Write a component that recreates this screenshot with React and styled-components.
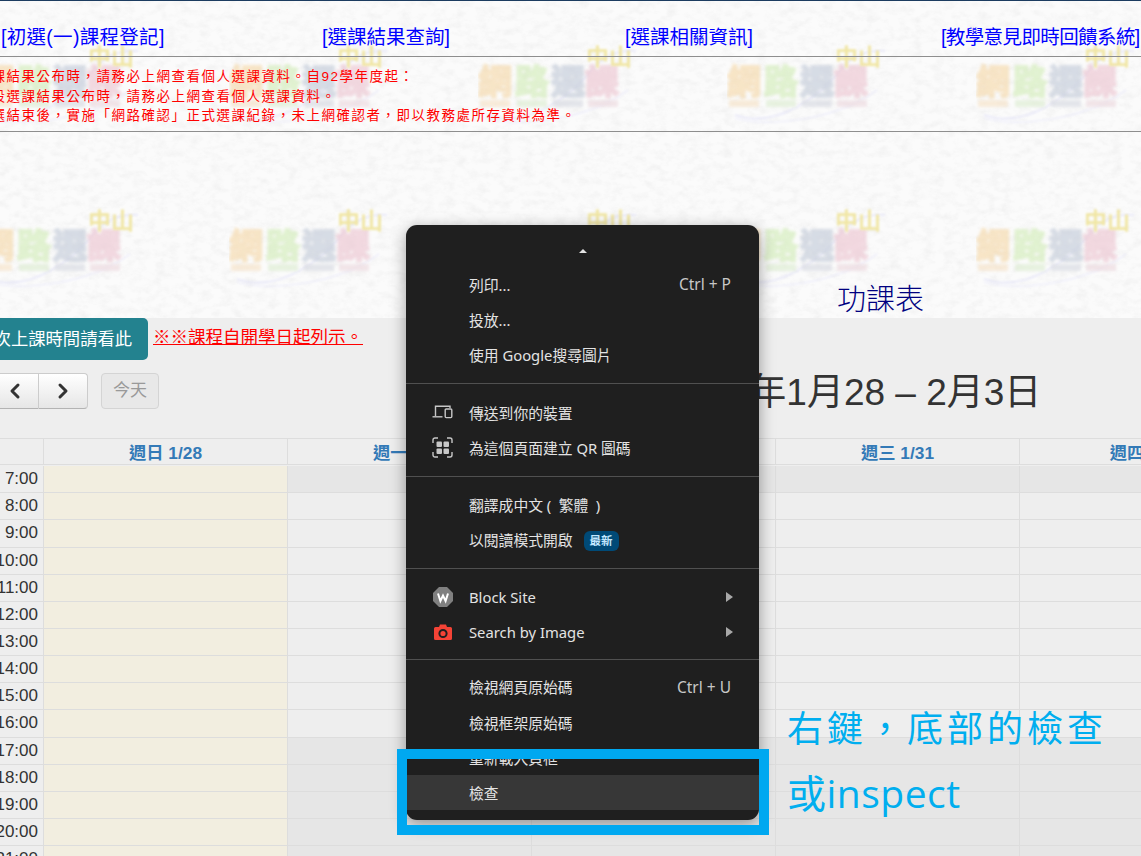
import React from 'react';
import styled, { createGlobalStyle } from 'styled-components';
import { ChevronLeft, ChevronRight } from 'lucide-react';

const GlobalStyle = createGlobalStyle`
    html, body {
        margin: 0;
        padding: 0;
        height: 100%;
        overflow: hidden;
    }
    body {
        font-family: "Liberation Sans", "Noto Sans CJK TC", sans-serif;
    }
    * {
        box-sizing: border-box;
    }
`;

const Screen = styled.div`
    position: relative;
    width: 1141px;
    height: 856px;
    overflow: hidden;
    background: #fafafa;
`;

const PaperLayer = styled.svg`
    position: absolute;
    top: 0;
    left: 0;
    width: 1141px;
    height: 856px;
`;

const Page = styled.div`
    position: relative;
    display: flex;
    flex-direction: column;
    height: 856px;
    border-top: 1px solid #1c3c60;
`;

const Nav = styled.nav`
    display: grid;
    grid-template-columns: 321px 303px 316px 1fr;
    height: 55px;
    padding: 24px 0 0 1px;
    font-size: 19.5px;
    line-height: 24px;
    white-space: nowrap;
`;

const NavLink = styled.a`
    color: #0000ff;
    letter-spacing: ${props => props.$spacing || 0}px;
    text-decoration: none;
`;

const Rule = styled.div`
    height: 1px;
    background: #8e8e8e;
`;

const Notice = styled.div`
    display: flex;
    flex-direction: column;
    height: 74px;
    padding-top: 10px;
    overflow: hidden;
`;

const NoticeLine = styled.div`
    margin-left: ${props => props.$offset}px;
    font-size: 13.5px;
    line-height: 19.5px;
    letter-spacing: 1.5px;
    color: #ff0000;
    white-space: nowrap;
`;

const Heading = styled.div`
    display: flex;
    align-items: flex-end;
    height: 186px;
    padding-left: 837px;
    font-size: 29px;
    font-weight: 300;
    line-height: 36px;
    color: #000080;
`;

const Panel = styled.div`
    flex: 1;
    background: #eeeeee;
    overflow: hidden;
`;

const NoticeRow = styled.div`
    display: flex;
    align-items: center;
    height: 42px;
`;

const TimeButton = styled.div`
    display: flex;
    align-items: center;
    justify-content: flex-end;
    width: 148px;
    height: 42px;
    padding: 0 16px 3px 0;
    overflow: hidden;
    background: #23828f;
    border-radius: 0 5px 5px 0;
    color: #ffffff;
    font-size: 17.3px;
    white-space: nowrap;
`;

const RedLink = styled.a`
    margin: 0 0 8px 5px;
    color: #ff0000;
    font-size: 17.5px;
    text-decoration: underline;
    white-space: nowrap;
`;

const Toolbar = styled.div`
    display: flex;
    align-items: center;
    height: 36px;
    margin-top: 13px;
`;

const ArrowGroup = styled.div`
    display: flex;
    margin-left: -10px;
`;

const ArrowButton = styled.button`
    display: flex;
    align-items: center;
    justify-content: center;
    width: 49px;
    height: 36px;
    padding: 0;
    background: linear-gradient(#ffffff, #e6e6e6);
    border: 1px solid #cccccc;
    border-bottom-color: #b3b3b3;
    border-left-width: ${props => (props.$last ? 0 : 1)}px;
    border-radius: ${props => (props.$last ? '0 4px 4px 0' : '4px 0 0 4px')};
    color: #333333;
`;

const TodayButton = styled.button`
    width: 58px;
    height: 36px;
    margin-left: 13px;
    padding: 0 0 5px;
    background: #e8e8e8;
    border: 1px solid #d4d4d4;
    border-radius: 4px;
    color: #999999;
    font-family: inherit;
    font-size: 17px;
`;

const RangeTitle = styled.h2`
    margin: 0 0 4px 508px;
    color: #333333;
    font-size: 37px;
    font-weight: 400;
    white-space: nowrap;
`;

const Calendar = styled.div`
    display: grid;
    grid-template-columns: 44px repeat(6, 244px);
    grid-auto-rows: 27.15px;
    width: 1508px;
    margin-top: 29px;
    border-top: 1px solid #dddddd;
`;

const DayHead = styled.div`
    display: flex;
    align-items: center;
    justify-content: center;
    height: 26px;
    border-right: 1px solid #dddddd;
    border-bottom: 1px solid #dddddd;
    color: #337ab7;
    font-size: 17.3px;
    font-weight: 700;
    white-space: nowrap;
`;

const TimeCell = styled.div`
    display: flex;
    align-items: center;
    justify-content: flex-end;
    padding-right: 5px;
    border-right: 1px solid #dddddd;
    border-bottom: 1px solid #dddddd;
    color: #333333;
    font-size: 17px;
`;

const Slot = styled.div`
    border-right: 1px solid #dddddd;
    border-bottom: 1px solid #dddddd;
    background: ${props => (props.$sunday ? '#f2eee0' : props.$closed ? '#e6e6e6' : 'transparent')};
`;

const Menu = styled.div`
    position: absolute;
    top: 225px;
    left: 406px;
    width: 353px;
    height: 595px;
    background: #1f1f1f;
    border-radius: 11px;
    box-shadow: 0 4px 16px rgba(0, 0, 0, 0.38);
    color: #e3e3e3;
    font-family: "Noto Sans", "Noto Sans CJK TC", sans-serif;
    font-size: 14.8px;
    overflow: hidden;
`;

const ScrollArrow = styled.div`
    display: flex;
    justify-content: center;
    height: 41.5px;
    padding-top: 24px;
    &::before {
        content: "";
        width: 0;
        height: 0;
        border-left: 4px solid transparent;
        border-right: 4px solid transparent;
        border-bottom: 4px solid #e3e3e3;
    }
`;

const MenuItem = styled.div`
    display: flex;
    align-items: center;
    height: 35.3px;
    padding: 0 28px 0 26px;
    background: ${props => (props.$active ? '#373737' : 'transparent')};
    white-space: nowrap;
`;

const ItemIcon = styled.span`
    display: flex;
    align-items: center;
    justify-content: center;
    width: 21px;
    height: 22px;
    margin-right: 16px;
`;

const ItemLabel = styled.span`
    flex: 1;
`;

const Shortcut = styled.span`
    color: #c7c7c7;
    font-size: 15.5px;
`;

const Badge = styled.span`
    display: inline-block;
    margin-left: 11px;
    padding: 0 6px;
    background: #004a77;
    border-radius: 6px;
    color: #c2e7ff;
    font-size: 11.5px;
    font-weight: 700;
    line-height: 20px;
    vertical-align: 1px;
`;

const SubArrow = styled.span`
    width: 0;
    height: 0;
    margin-right: -2px;
    border-top: 5px solid transparent;
    border-bottom: 5px solid transparent;
    border-left: 7px solid #a8a8a8;
`;

const Separator = styled.div`
    height: 1px;
    margin: ${props => props.$before}px 0 ${props => props.$after}px;
    background: #505050;
`;

const Highlight = styled.div`
    position: absolute;
    top: 749px;
    left: 397px;
    width: 372px;
    height: 86px;
    border: 10px solid #00a8f0;
`;

const Annotation = styled.div`
    position: absolute;
    top: ${props => props.$top}px;
    left: 787px;
    color: #00aeef;
    font-family: "Open Sans", "Noto Sans CJK TC", sans-serif;
    font-size: ${props => props.$size}px;
    line-height: 50px;
    letter-spacing: ${props => props.$spacing}px;
    white-space: nowrap;
`;

const days = ['週日 1/28', '週一 1/29', '週二 1/30', '週三 1/31', '週四 2/1', '週五 2/2'];
const hours = [7, 8, 9, 10, 11, 12, 13, 14, 15, 16, 17, 18, 19, 20, 21];

const Paper = () => (
    <PaperLayer aria-hidden="true">
        <defs>
            <filter id="grain" x="0" y="0" width="100%" height="100%">
                <feTurbulence type="fractalNoise" baseFrequency="0.09 0.14" numOctaves="3" seed="7" />
                <feColorMatrix values="0 0 0 0 0.75  0 0 0 0 0.75  0 0 0 0 0.75  1.2 1.2 0 0 -1.05" />
            </filter>
            <filter id="soft" x="-10%" y="-10%" width="120%" height="120%">
                <feGaussianBlur stdDeviation="0.9" />
            </filter>
            <filter id="blobby" x="-10%" y="-10%" width="120%" height="120%">
                <feGaussianBlur stdDeviation="1.8" />
            </filter>
            <pattern id="mark" x="-20" y="40" width="249" height="164" patternUnits="userSpaceOnUse">
                <path d="M8 75 C50 90 95 55 118 25 C130 14 145 10 158 11" fill="none" stroke="#e2e2f8" strokeWidth="1.6" filter="url(#soft)" />
                <path d="M8 78 C40 88 110 80 150 50" fill="none" stroke="#e8e8fa" strokeWidth="1.2" filter="url(#soft)" />
                <g filter="url(#blobby)" fontFamily='"Noto Sans CJK TC", sans-serif' fontWeight="700" fontSize="34" strokeWidth="2" opacity="0.75">
                    <text x="0" y="54" fill="#f5d8a8" stroke="#f5d8a8">網</text>
                    <text x="37" y="54" fill="#d2ecb8" stroke="#d2ecb8">路</text>
                    <text x="73" y="54" fill="#c2cad8" stroke="#c2cad8">選</text>
                    <text x="107" y="54" fill="#ecc4d0" stroke="#ecc4d0">課</text>
                    <rect x="2" y="60" width="30" height="7" fill="#f6e2c6" />
                    <rect x="39" y="60" width="30" height="7" fill="#dcecd0" />
                    <rect x="75" y="60" width="30" height="7" fill="#d6d8e0" />
                    <rect x="110" y="60" width="30" height="7" fill="#ecd8de" />
                </g>
                <text x="108" y="25" fill="#efe396" fontFamily='"Noto Sans CJK TC", sans-serif' fontWeight="700" fontSize="23" filter="url(#soft)">中山</text>
            </pattern>
        </defs>
        <rect width="1141" height="856" fill="#fbfbfb" />
        <rect width="1141" height="856" filter="url(#grain)" opacity="0.4" />
        <rect width="1141" height="856" fill="url(#mark)" opacity="0.85" />
    </PaperLayer>
);

const DevicesIcon = () => (
    <svg width="21" height="14" viewBox="0 0 21 14" fill="none" stroke="#c7c7c7" strokeWidth="1.4">
        <path d="M3.5 11V1.2H18V3" />
        <path d="M0.5 11.8H10.5" />
        <rect x="13.2" y="4" width="6.6" height="8.6" rx="1" />
    </svg>
);

const QrIcon = () => (
    <svg width="21" height="21" viewBox="0 0 21 21" fill="none">
        <path d="M1 6V3a2 2 0 0 1 2-2h3M15 1h3a2 2 0 0 1 2 2v3M20 15v3a2 2 0 0 1-2 2h-3M6 20H3a2 2 0 0 1-2-2v-3" stroke="#c7c7c7" strokeWidth="1.4" />
        <rect x="4.5" y="4.5" width="5.5" height="5.5" rx="1" fill="#c7c7c7" />
        <rect x="11.5" y="4.5" width="5.5" height="5.5" rx="1" fill="#c7c7c7" />
        <rect x="4.5" y="11.5" width="5.5" height="5.5" rx="1" fill="#c7c7c7" />
        <rect x="11.5" y="11.5" width="5.5" height="5.5" rx="1" fill="#c7c7c7" />
    </svg>
);

const BlockSiteIcon = () => (
    <svg width="20" height="20" viewBox="0 0 20 20">
        <polygon points="6,0 14,0 20,6 20,14 14,20 6,20 0,14 0,6" fill="#808080" />
        <path d="M5 6.5L7.4 14L10 8.5L12.6 14L15 6.5" fill="none" stroke="#ffffff" strokeWidth="2" />
    </svg>
);

const CameraIcon = () => (
    <svg width="18" height="16" viewBox="0 0 18 16">
        <path d="M1.5 3H5L6 0.5H12L13 3H16.5A1.5 1.5 0 0 1 18 4.5V14.5A1.5 1.5 0 0 1 16.5 16H1.5A1.5 1.5 0 0 1 0 14.5V4.5A1.5 1.5 0 0 1 1.5 3Z" fill="#f44336" />
        <circle cx="9" cy="9.5" r="3.6" fill="none" stroke="#1f1f1f" strokeWidth="2" />
    </svg>
);

const App = () => (
    <Screen>
        <GlobalStyle />
        <Paper />
        <Page>
            <Nav>
                <NavLink $spacing={0.3}>[初選(一)課程登記]</NavLink>
                <NavLink>[選課結果查詢]</NavLink>
                <NavLink>[選課相關資訊]</NavLink>
                <NavLink $spacing={-0.6}>[教學意見即時回饋系統]</NavLink>
            </Nav>
            <Rule />
            <Notice>
                <NoticeLine $offset={-23.5}>選課結果公布時，請務必上網查看個人選課資料。自92學年度起：</NoticeLine>
                <NoticeLine $offset={-8.5}>段選課結果公布時，請務必上網查看個人選課資料。</NoticeLine>
                <NoticeLine $offset={-8.5}>選結束後，實施「網路確認」正式選課紀錄，未上網確認者，即以教務處所存資料為準。</NoticeLine>
            </Notice>
            <Rule />
            <Heading>功課表</Heading>
            <Panel>
                <NoticeRow>
                    <TimeButton>每次上課時間請看此</TimeButton>
                    <RedLink>※※課程自開學日起列示。</RedLink>
                </NoticeRow>
                <Toolbar>
                    <ArrowGroup>
                        <ArrowButton><ChevronLeft size={24} strokeWidth={3} /></ArrowButton>
                        <ArrowButton $last><ChevronRight size={24} strokeWidth={3} /></ArrowButton>
                    </ArrowGroup>
                    <TodayButton>今天</TodayButton>
                    <RangeTitle>2024年1月28 – 2月3日</RangeTitle>
                </Toolbar>
                <Calendar>
                    <DayHead />
                    {days.map(day => <DayHead key={day}>{day}</DayHead>)}
                    {hours.map(hour => (
                        <React.Fragment key={hour}>
                            <TimeCell>{hour}:00</TimeCell>
                            {days.map((day, i) => (
                                <Slot key={day} $sunday={i === 0} $closed={hour === 7 || hour >= 17} />
                            ))}
                        </React.Fragment>
                    ))}
                </Calendar>
            </Panel>
        </Page>
        <Menu>
            <ScrollArrow />
            <MenuItem><ItemIcon /><ItemLabel>列印...</ItemLabel><Shortcut>Ctrl + P</Shortcut></MenuItem>
            <MenuItem><ItemIcon /><ItemLabel>投放...</ItemLabel></MenuItem>
            <MenuItem><ItemIcon /><ItemLabel>使用 Google搜尋圖片</ItemLabel></MenuItem>
            <Separator $before={11} $after={10} />
            <MenuItem><ItemIcon><DevicesIcon /></ItemIcon><ItemLabel>傳送到你的裝置</ItemLabel></MenuItem>
            <MenuItem><ItemIcon><QrIcon /></ItemIcon><ItemLabel>為這個頁面建立 QR 圖碼</ItemLabel></MenuItem>
            <Separator $before={11} $after={10} />
            <MenuItem><ItemIcon /><ItemLabel>翻譯成中文 ({'\u2002'}繁體{'\u2002'})</ItemLabel></MenuItem>
            <MenuItem><ItemIcon /><ItemLabel>以閱讀模式開啟<Badge>最新</Badge></ItemLabel></MenuItem>
            <Separator $before={10} $after={10.5} />
            <MenuItem><ItemIcon><BlockSiteIcon /></ItemIcon><ItemLabel>Block Site</ItemLabel><SubArrow /></MenuItem>
            <MenuItem><ItemIcon><CameraIcon /></ItemIcon><ItemLabel>Search by Image</ItemLabel><SubArrow /></MenuItem>
            <Separator $before={9.5} $after={9} />
            <MenuItem><ItemIcon /><ItemLabel>檢視網頁原始碼</ItemLabel><Shortcut>Ctrl + U</Shortcut></MenuItem>
            <MenuItem><ItemIcon /><ItemLabel>檢視框架原始碼</ItemLabel></MenuItem>
            <MenuItem><ItemIcon /><ItemLabel>重新載入頁框</ItemLabel></MenuItem>
            <MenuItem $active><ItemIcon /><ItemLabel>檢查</ItemLabel></MenuItem>
        </Menu>
        <Highlight />
        <Annotation $top={704} $size={36} $spacing={4}>右鍵，底部的檢查</Annotation>
        <Annotation $top={768} $size={39} $spacing={0.5}>或inspect</Annotation>
    </Screen>
);

export default App;
